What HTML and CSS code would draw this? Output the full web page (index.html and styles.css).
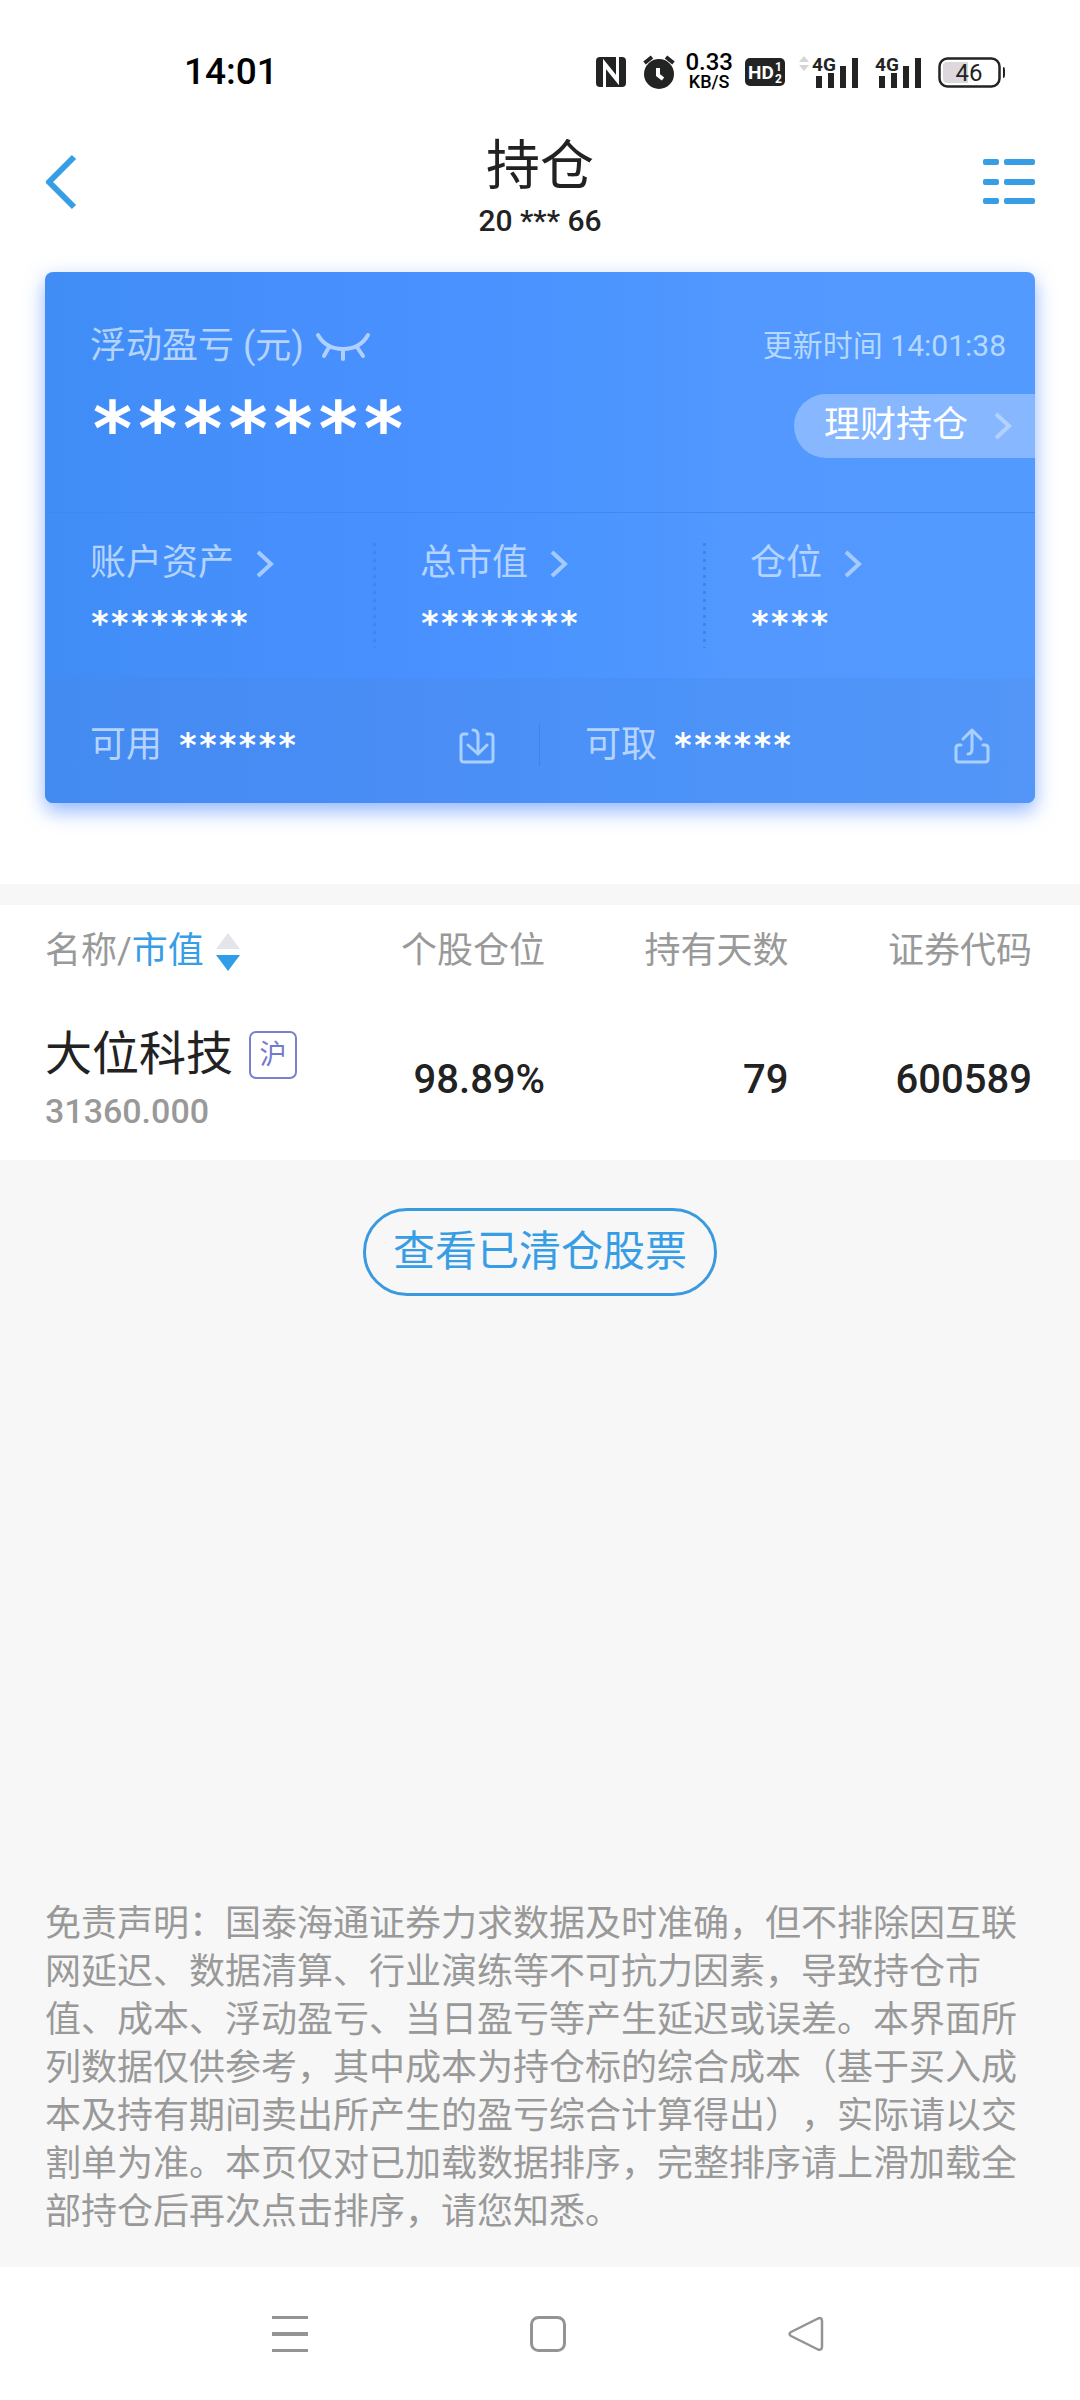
FILE: index.html
```html
<!DOCTYPE html>
<html lang="zh-CN">
<head>
<meta charset="utf-8">
<meta name="viewport" content="width=device-width, initial-scale=1">
<title>持仓</title>
<link rel="stylesheet" href="styles.css">
</head>
<body>
<div class="status-bar">
  <time class="clock">14:01</time>
  <div class="status-icons">
    <svg width="30" height="30" viewBox="0 0 30 30" aria-label="NFC"><rect width="30" height="30" rx="4" fill="#222423"/><path d="M8.500 30V6l12.500 15.500M21.500 0v24L9 8.500" fill="none" stroke="#fff" stroke-width="3"/></svg>
    <svg class="alarm" width="32" height="34" viewBox="0 0 32 34" aria-label="闹钟"><circle cx="16" cy="19" r="15" fill="#222423"/><path d="M1.500 8 9 2M30.500 8 23 2" stroke="#222423" stroke-width="4"/><path d="M15 13v7l5 4" fill="none" stroke="#fff" stroke-width="4"/></svg>
    <div class="net-speed"><span class="speed">0.33</span><span class="unit">KB/S</span></div>
    <svg class="hd" width="40" height="28" viewBox="0 0 40 28" aria-label="HD"><rect width="40" height="28" rx="5" fill="#222423"/><text x="3" y="21" font-size="19" font-weight="700" fill="#fff">HD</text><text x="30" y="13" font-size="12" font-weight="700" fill="#fff">1</text><text x="30" y="25" font-size="12" font-weight="700" fill="#fff">2</text></svg>
    <svg class="signal-first" width="60" height="32" viewBox="0 0 60 32" aria-label="4G"><path d="M0 6 5 0l5 6zM0 9h10l-5 6z" fill="#d5d5d5"/><text x="13" y="15" font-size="19" font-weight="700" fill="#222423">4G</text><path d="M17 20h6v12h-6zM29 17h6v15h-6zM41 10h6v22h-6zM53 2h6v30h-6z" fill="#222423"/></svg>
    <svg class="signal" width="47" height="32" viewBox="13 0 47 32" aria-label="4G"><text x="13" y="15" font-size="19" font-weight="700" fill="#222423">4G</text><path d="M17 20h6v12h-6zM29 17h6v15h-6zM41 10h6v22h-6zM53 2h6v30h-6z" fill="#222423"/></svg>
    <svg class="battery" width="68" height="31" viewBox="0 0 68 31" aria-label="电量"><rect x="1.500" y="1.500" width="60" height="28" rx="8" fill="#fff" stroke="#222423" stroke-width="2.500"/><path d="M9 5h21v21H9a4 4 0 0 1-4-4V9a4 4 0 0 1 4-4z" fill="#dcd8dd"/><path d="M65 10q2 0 2 3v5q0 3-2 3z" fill="#222423"/><text x="31" y="24" font-size="24" text-anchor="middle" fill="#222423">46</text></svg>
  </div>
</div>

<header class="app-header">
  <button class="icon-button" aria-label="返回"><svg width="32" height="56" viewBox="0 0 32 56"><path d="M29 3 4 28l25 25" fill="none" stroke="#379ee6" stroke-width="6" stroke-linejoin="round"/></svg></button>
  <div class="heading">
    <h1 class="title">持仓</h1>
    <p class="account">20 *** 66</p>
  </div>
  <button class="icon-button" aria-label="菜单"><svg width="52" height="46" viewBox="0 0 52 46" fill="#379ee6"><rect width="16" height="6" rx="2"/><rect x="21" width="31" height="6" rx="2"/><rect y="20" width="16" height="6" rx="2"/><rect x="21" y="20" width="31" height="6" rx="2"/><rect y="39" width="16" height="6" rx="2"/><rect x="21" y="39" width="31" height="6" rx="2"/></svg></button>
</header>

<section class="summary">
  <div class="card">
    <div class="profit">
      <div>
        <div class="label-row">
          <span class="label">浮动盈亏 (元)</span>
          <button class="icon-button" aria-label="显示金额"><svg width="54" height="28" viewBox="0 0 54 28" fill="none" stroke="#b0d0ff" stroke-width="4" stroke-linecap="round"><path d="M2 2q8 14 25 14T52 2M13 14l-5 9M27 17v9M41 14l6 9"/></svg></button>
        </div>
        <div class="stars stars-large">*******</div>
      </div>
      <div class="profit-side">
        <p class="updated">更新时间 14:01:38</p>
        <a class="pill" href="#">理财持仓<svg width="18" height="28" viewBox="0 0 18 28"><path d="m2 2 13 12L2 26" class="chevron"/></svg></a>
      </div>
    </div>
    <div class="metrics">
      <a class="metric" href="#"><span class="metric-label">账户资产<svg width="18" height="28" viewBox="0 0 18 28"><path d="m2 2 13 12L2 26" class="chevron"/></svg></span><span class="stars">********</span></a>
      <a class="metric" href="#"><span class="metric-label">总市值<svg width="18" height="28" viewBox="0 0 18 28"><path d="m2 2 13 12L2 26" class="chevron"/></svg></span><span class="stars">********</span></a>
      <a class="metric" href="#"><span class="metric-label">仓位<svg width="18" height="28" viewBox="0 0 18 28"><path d="m2 2 13 12L2 26" class="chevron"/></svg></span><span class="stars">****</span></a>
    </div>
    <div class="funds">
      <div class="fund">
        <span class="label">可用</span><span class="stars">******</span>
        <button class="icon-button fund-action" aria-label="转入"><svg width="36" height="36" viewBox="0 0 36 36" class="fund-icon"><path d="M8 6H5Q2 6 2 9v22q0 3 3 3h26q3 0 3-3V9q0-3-3-3h-3M14 2q5 0 5 6v18M9 17l10 9 9-9"/></svg></button>
      </div>
      <div class="fund">
        <span class="label">可取</span><span class="stars">******</span>
        <button class="icon-button fund-action" aria-label="转出"><svg width="36" height="36" viewBox="0 0 36 36" class="fund-icon"><path d="M7 17H5q-3 0-3 3v11q0 3 3 3h26q3 0 3-3V20q0-3-3-3h-2M14 26q4 0 4-5V2M9 11l9-9 9 9"/></svg></button>
      </div>
    </div>
  </div>
</section>

<main class="content">
  <section class="holdings">
    <table class="table">
      <thead>
        <tr>
          <th class="name-col"><button class="sort">名称/<span class="active">市值</span><svg width="24" height="38" viewBox="0 0 24 38"><path d="M12 0l12 16H0z" fill="#e4e5e9"/><path d="M0 22h24L12 38z" fill="#2f9de8"/></svg></button></th>
          <th>个股仓位</th><th>持有天数</th><th>证券代码</th>
        </tr>
      </thead>
      <tbody>
        <tr>
          <td class="name-col"><div class="stock"><span class="stock-name">大位科技</span><span class="market">沪</span></div><div class="value">31360.000</div></td>
          <td>98.89%</td><td>79</td><td>600589</td>
        </tr>
      </tbody>
    </table>
  </section>
  <button class="cleared">查看已清仓股票</button>
  <p class="disclaimer">免责声明：国泰海通证券力求数据及时准确，但不排除因互联网延迟、数据清算、行业演练等不可抗力因素，导致持仓市值、成本、浮动盈亏、当日盈亏等产生延迟或误差。本界面所列数据仅供参考，其中成本为持仓标的综合成本（基于买入成本及持有期间卖出所产生的盈亏综合计算得出），实际请以交割单为准。本页仅对已加载数据排序，完整排序请上滑加载全部持仓后再次点击排序，请您知悉。</p>
</main>

<nav class="system-nav">
  <button class="icon-button" aria-label="最近任务"><svg width="36" height="36" viewBox="0 0 36 36" fill="#949494"><path d="M0 0h36v3H0zM0 16h36v4H0zM0 33h36v3H0z"/></svg></button>
  <button class="icon-button" aria-label="主屏幕"><svg width="36" height="36" viewBox="0 0 36 36" fill="none" stroke="#949494" stroke-width="3"><rect x="1.500" y="1.500" width="33" height="33" rx="7"/></svg></button>
  <button class="icon-button" aria-label="返回上一级"><svg width="36" height="36" viewBox="0 0 36 36" fill="none" stroke="#949494" stroke-width="2.500" stroke-linejoin="round"><path d="M30 2.500 3 16q-3 2 0 4l27 13.500q4 1 4-3V5q0-4-4-2.500z"/></svg></button>
</nav>
</body>
</html>
```
FILE: styles.css
```css
* { box-sizing: border-box; }

body {
  margin: 0;
  min-height: 100vh;
  display: flex;
  flex-direction: column;
  background: #fff;
  color: #222;
  font-family: Roboto, "Noto Sans CJK SC", sans-serif;
  line-height: 1.2;
}

h1, p { margin: 0; font-weight: 400; }
svg { display: block; flex: none; overflow: visible; }
a { color: inherit; text-decoration: none; }
button { font: inherit; color: inherit; background: none; border: 0; padding: 0; cursor: pointer; }
.icon-button { display: block; flex: none; }

/* Phone status bar */
.status-bar {
  display: flex;
  justify-content: space-between;
  align-items: center;
  height: 120px;
  padding: 24px 74px 0 184px;
}
.clock { font-size: 37px; font-weight: 500; color: #000; }
.status-icons { display: flex; align-items: center; }
.alarm { margin-left: 17px; }
.net-speed { display: flex; flex-direction: column; align-items: center; margin-left: 10px; color: #000; font-weight: 500; line-height: 20px; }
.speed { font-size: 24px; }
.unit { font-size: 18px; }
.hd { margin-left: 12px; }
.signal-first { margin-left: 14px; }
.signal { margin-left: 16px; }
.battery { margin-left: 16px; }

/* App header */
.app-header {
  display: flex;
  justify-content: space-between;
  align-items: center;
  height: 124px;
  padding: 0 45px;
}
.heading { position: absolute; left: 0; right: 0; padding-top: 6px; text-align: center; pointer-events: none; }
.title { font-size: 54px; line-height: 72px; }
.account { font-size: 30px; line-height: 36px; font-weight: 500; }

/* Summary card */
.summary { padding: 28px 45px 81px; }
.card {
  overflow: hidden;
  border-radius: 8px;
  background: linear-gradient(90deg, #408df6, #4990ff 35%, #4b95ff 55%, #5298ff 70%, #539aff);
  box-shadow: 0 8px 20px rgba(74, 134, 255, 0.6);
}
.profit { display: flex; justify-content: space-between; height: 240px; padding: 49px 0 0 45px; }
.label-row { display: flex; align-items: center; gap: 12px; height: 52px; }
.label { font-size: 36px; color: #b4d4ff; }
.stars { font-family: "DejaVu Sans Mono", monospace; font-size: 33px; font-weight: 700; line-height: 40px; color: #fff; }
.stars-large { padding-top: 12px; font-size: 75px; line-height: 88px; }
.profit-side { display: flex; flex-direction: column; align-items: flex-end; gap: 23px; }
.updated { padding-right: 29px; font-size: 30px; line-height: 50px; color: #b4d8ff; }
.pill {
  display: flex;
  align-items: center;
  gap: 26px;
  height: 64px;
  padding: 0 23px 0 30px;
  border-radius: 32px 0 0 32px;
  background: rgba(255, 255, 255, 0.3);
  font-size: 36px;
  color: #fff;
}
.chevron { fill: none; stroke: #a4caff; stroke-width: 4; }
.pill .chevron { stroke: #b4d2ff; }
.metrics { display: grid; grid-template-columns: repeat(3, 1fr); height: 166px; border-top: 1px solid #4387ef; }
.metric { position: relative; display: flex; flex-direction: column; gap: 14px; padding: 25px 0 0 45px; }
.metric + .metric::before {
  content: "";
  position: absolute;
  left: -2px;
  top: 30px;
  width: 3px;
  height: 105px;
  background: repeating-linear-gradient(#3f86e6 0 3px, transparent 3px 8px);
}
.metric-label { display: flex; align-items: center; gap: 22px; height: 52px; font-size: 36px; color: #b4d4ff; }
.funds { display: grid; grid-template-columns: 1fr 1fr; height: 125px; background: linear-gradient(90deg, #438af1, #4a8ef6 40%, #4b92f8 60%, #5396f8); }
.fund { position: relative; display: flex; align-items: center; gap: 16px; padding: 10px 45px 0; }
.fund + .fund::before { content: ""; position: absolute; left: -1px; top: 46px; width: 1px; height: 42px; background: #4083e4; }
.fund-action { margin-left: auto; }
.fund-icon { fill: none; stroke: #a9d0ff; stroke-width: 3; stroke-linejoin: round; stroke-linecap: round; }

/* Holdings */
.content { flex: 1; display: flex; flex-direction: column; align-items: center; padding: 21px 0 31px; background: #f7f7f7; }
.holdings { width: 100%; padding: 0 48px 0 45px; background: #fff; }
.table { width: 100%; table-layout: fixed; border-collapse: collapse; text-align: right; }
.table th { height: 94px; padding: 0; font-size: 36px; font-weight: 400; color: #999; }
.table td { height: 161px; padding: 0; font-size: 40px; font-weight: 500; }
.table .name-col { width: 26%; text-align: left; white-space: nowrap; }
.sort { display: flex; align-items: center; }
.sort svg { margin-left: 12px; }
.active { color: #379ee6; }
.stock { display: flex; align-items: center; gap: 16px; height: 60px; }
.stock-name { font-size: 47px; font-weight: 400; }
.market { width: 48px; height: 48px; border: 2px solid #7b80cc; border-radius: 7px; font-size: 27px; font-weight: 400; line-height: 44px; text-align: center; color: #7379cd; }
.value { padding-top: 2px; font-size: 34px; line-height: 48px; color: #999; }
.cleared {
  margin-top: 48px;
  height: 88px;
  padding: 0 27px;
  border: 3px solid #3a9ae0;
  border-radius: 44px;
  font-size: 42px;
  color: #379ee6;
}
.disclaimer {
  width: 100%;
  margin-top: auto;
  padding: 0 45px;
  font-size: 36px;
  line-height: 48px;
  color: #999;
  text-spacing-trim: space-all;
}

/* System navigation */
.system-nav { display: flex; justify-content: space-between; align-items: flex-start; height: 133px; padding: 49px 256px 0 272px; }
```
